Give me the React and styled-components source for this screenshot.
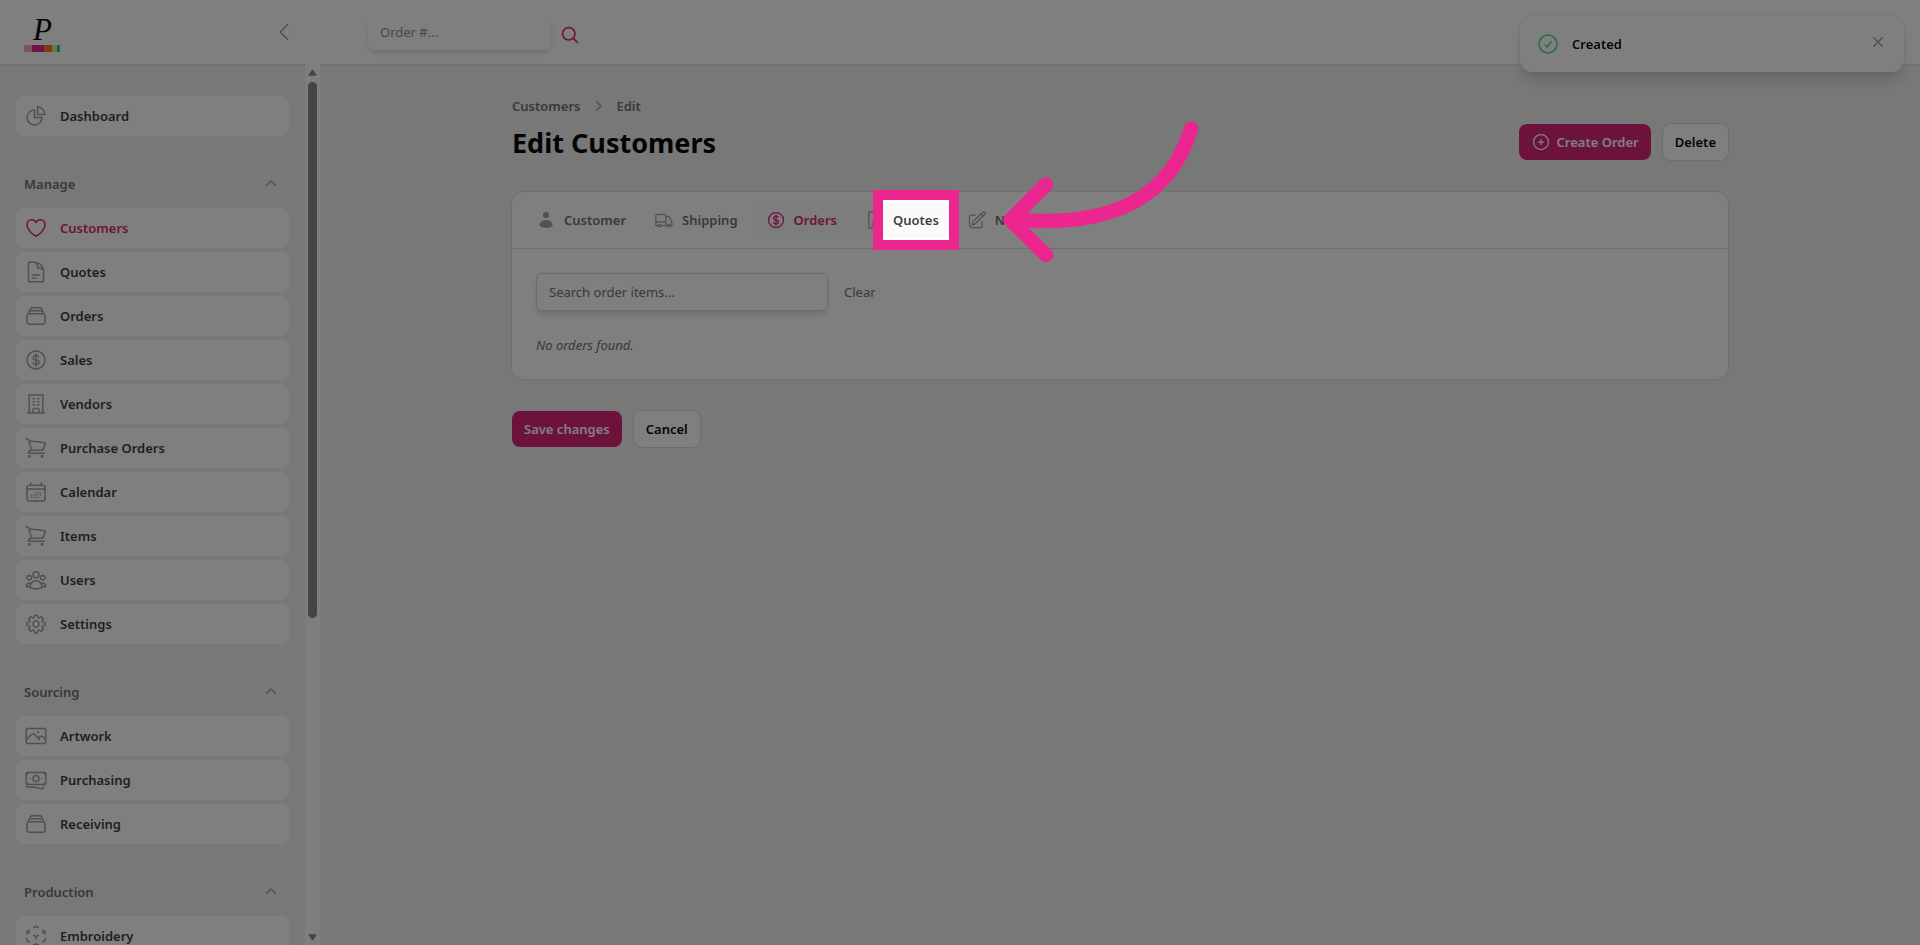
import React from 'react';
import styled, { createGlobalStyle } from 'styled-components';
import {
	HiOutlineChartPie,
	HiOutlineHeart,
	HiOutlineDocumentText,
	HiOutlineRectangleStack,
	HiOutlineCurrencyDollar,
	HiOutlineBuildingOffice,
	HiOutlineShoppingCart,
	HiOutlineCalendarDays,
	HiOutlineUserGroup,
	HiOutlineCog8Tooth,
	HiOutlinePhoto,
	HiOutlineBanknotes,
	HiOutlineCubeTransparent,
	HiOutlineTruck,
	HiOutlinePencilSquare,
	HiOutlinePlusCircle,
	HiOutlineCheckCircle,
	HiOutlineChevronLeft,
	HiOutlineMagnifyingGlass,
	HiMiniUser,
	HiMiniChevronUp,
	HiMiniChevronRight,
	HiMiniXMark,
} from 'react-icons/hi2';

const GlobalStyle = createGlobalStyle`
	* {
		box-sizing: border-box;
	}
	body {
		margin: 0;
		background: #f0f0f0;
		color: #09090b;
		font-family: "Noto Sans", "Open Sans", sans-serif;
		font-size: 13px;
		line-height: 20px;
	}
	button, input {
		font: inherit;
	}
	button {
		cursor: pointer;
	}
	a {
		color: inherit;
		text-decoration: none;
	}
	svg {
		flex: none;
	}
`;

const Page = styled.div`
	display: flex;
	flex-direction: column;
	height: 100vh;
	overflow: hidden;
`;

const TopBar = styled.header`
	display: flex;
	align-items: center;
	flex: none;
	height: 64px;
	background: #fff;
	box-shadow: 0 0 0 1px #e4e4e7, 0 1px 2px rgba(0, 0, 0, 0.1);
`;

const Brand = styled.div`
	display: flex;
	align-items: center;
	justify-content: space-between;
	width: 320px;
	padding: 0 24px;
`;

const CollapseButton = styled.button`
	display: flex;
	padding: 0;
	border: 0;
	background: none;
	color: #a1a1aa;
`;

const OrderSearch = styled.form`
	display: flex;
	align-items: center;
	gap: 9px;
	padding-left: 48px;
`;

const OrderInput = styled.input`
	width: 183px;
	height: 36px;
	padding: 0 12px;
	border: 0;
	border-radius: 8px;
	background: #fff;
	box-shadow: 0 4px 6px -1px rgba(0, 0, 0, 0.14);
	&::placeholder {
		color: #8f8f98;
		opacity: 1;
	}
`;

const SearchButton = styled.button`
	display: flex;
	padding: 6px 0 0;
	border: 0;
	background: none;
	color: #db2777;
`;

const Body = styled.div`
	display: flex;
	flex: 1;
	min-height: 0;
`;

const Sidebar = styled.aside`
	display: flex;
	flex: none;
	width: 320px;
	overflow: hidden;
`;

const Nav = styled.nav`
	display: flex;
	flex: 1;
	flex-direction: column;
	gap: 32px;
	padding: 32px 16px;
`;

const NavGroup = styled.div`
	display: flex;
	flex-direction: column;
	gap: 4px;
`;

const GroupButton = styled.button`
	display: flex;
	align-items: center;
	justify-content: space-between;
	height: 36px;
	padding: 0 8px 4px;
	border: 0;
	background: none;
	color: #71717a;
	font-weight: 600;
`;

const NavItem = styled.a`
	display: flex;
	align-items: center;
	flex: none;
	gap: 12px;
	height: 40px;
	padding: 0 8px;
	border-radius: 8px;
	background: #fff;
	color: ${props => (props.$active ? '#db2777' : '#3f3f46')};
	font-weight: 600;
	svg {
		color: ${props => (props.$active ? '#db2777' : '#a1a1aa')};
	}
`;

const ScrollTrack = styled.div`
	display: flex;
	flex-direction: column;
	align-items: center;
	justify-content: space-between;
	width: 15px;
	padding: 5px 0 4px;
	background: #fcfcfc;
`;

const ScrollTop = styled.div`
	display: flex;
	flex-direction: column;
	align-items: center;
	gap: 6px;
	height: 63%;
`;

const ScrollThumb = styled.div`
	flex: 1;
	width: 9px;
	border-radius: 5px;
	background: #8a8a8a;
`;

const Main = styled.main`
	flex: 1;
	min-width: 0;
`;

const Content = styled.div`
	max-width: 1280px;
	margin: 0 auto;
	padding: 32px;
`;

const PageHeader = styled.div`
	display: flex;
	align-items: center;
	justify-content: space-between;
	margin-bottom: 30px;
`;

const Breadcrumbs = styled.nav`
	display: flex;
	align-items: center;
	gap: 8px;
	margin-bottom: 8px;
	color: #71717a;
	font-weight: 600;
	svg {
		color: #a1a1aa;
	}
`;

const Title = styled.h1`
	margin: 0;
	font-size: 27px;
	font-weight: 700;
	line-height: 38px;
`;

const Buttons = styled.div`
	display: flex;
	gap: 12px;
`;

const HeaderButtons = styled(Buttons)`
	margin-top: 26px;
`;

const Button = styled.button`
	display: flex;
	align-items: center;
	gap: 6px;
	height: 36px;
	padding: 0 12px;
	border: 0;
	border-radius: 8px;
	background: ${props => (props.$primary ? '#db2777' : '#fff')};
	color: ${props => (props.$primary ? '#fff' : '#09090b')};
	box-shadow: ${props => (props.$primary ? 'none' : '0 0 0 1px #d9d9dc, 0 1px 2px rgba(0, 0, 0, 0.05)')};
	font-weight: 600;
`;

const Card = styled.section`
	margin-bottom: 32px;
	border-radius: 12px;
	background: #fff;
	box-shadow: 0 0 0 1px #e0e0e3, 0 1px 2px rgba(0, 0, 0, 0.05);
`;

const Tabs = styled.div`
	display: flex;
	gap: 4px;
	padding: 10px 12px;
	border-bottom: 1px solid #dcdcdf;
`;

const Tab = styled.button`
	display: flex;
	align-items: center;
	gap: 8px;
	height: 36px;
	padding: 0 12px;
	border: 0;
	border-radius: 8px;
	background: ${props => (props.$active || props.$hovered ? '#fafafa' : 'none')};
	color: ${props => (props.$active ? '#db2777' : props.$hovered ? '#3f3f46' : '#71717a')};
	font-weight: 600;
	svg {
		color: ${props => (props.$active ? '#db2777' : '#a1a1aa')};
	}
`;

const TabLabel = styled.span`
	position: relative;
`;

const Panel = styled.div`
	padding: 24px;
`;

const SearchRow = styled.div`
	display: flex;
	align-items: center;
	gap: 16px;
	margin-bottom: 24px;
`;

const ItemsInput = styled.input`
	width: 292px;
	height: 38px;
	padding: 0 12px;
	border: 1px solid #d4d4d8;
	border-radius: 6px;
	background: #fff;
	box-shadow: 0 4px 6px -1px rgba(0, 0, 0, 0.14);
	&::placeholder {
		color: #71717a;
		opacity: 1;
	}
`;

const ClearButton = styled.button`
	padding: 0;
	border: 0;
	background: none;
	color: #71717a;
`;

const EmptyText = styled.p`
	margin: 0;
	color: #71717a;
	font-style: italic;
`;

const Toast = styled.div`
	position: fixed;
	top: 16px;
	right: 16px;
	display: flex;
	align-items: center;
	gap: 12px;
	width: 384px;
	height: 56px;
	padding: 0 16px;
	border-radius: 12px;
	background: #fff;
	box-shadow: 0 0 0 1px rgba(9, 9, 11, 0.05), 0 10px 15px -3px rgba(0, 0, 0, 0.16);
	font-weight: 600;
	svg {
		color: #4ade80;
	}
`;

const CloseButton = styled.button`
	display: flex;
	margin-left: auto;
	padding: 0 0 4px;
	border: 0;
	background: none;
	svg {
		color: #a1a1aa;
	}
`;

// dims the whole page except for the label it surrounds
const Spotlight = styled.span`
	position: absolute;
	z-index: 20;
	inset: -20px;
	border: 10px solid #ec268f;
	box-shadow: 0 0 0 4000px rgba(0, 0, 0, 0.5);
	pointer-events: none;
`;

const Arrow = styled.svg`
	position: absolute;
	z-index: 21;
	top: -91px;
	left: 100%;
	margin-left: 60px;
	pointer-events: none;
`;

const navGroups = [
	{
		title: 'Manage',
		items: [
			{ label: 'Customers', icon: HiOutlineHeart, active: true },
			{ label: 'Quotes', icon: HiOutlineDocumentText },
			{ label: 'Orders', icon: HiOutlineRectangleStack },
			{ label: 'Sales', icon: HiOutlineCurrencyDollar },
			{ label: 'Vendors', icon: HiOutlineBuildingOffice },
			{ label: 'Purchase Orders', icon: HiOutlineShoppingCart },
			{ label: 'Calendar', icon: HiOutlineCalendarDays },
			{ label: 'Items', icon: HiOutlineShoppingCart },
			{ label: 'Users', icon: HiOutlineUserGroup },
			{ label: 'Settings', icon: HiOutlineCog8Tooth },
		],
	},
	{
		title: 'Sourcing',
		items: [
			{ label: 'Artwork', icon: HiOutlinePhoto },
			{ label: 'Purchasing', icon: HiOutlineBanknotes },
			{ label: 'Receiving', icon: HiOutlineRectangleStack },
		],
	},
	{
		title: 'Production',
		items: [{ label: 'Embroidery', icon: HiOutlineCubeTransparent }],
	},
];

const tabs = [
	{ label: 'Customer', icon: HiMiniUser },
	{ label: 'Shipping', icon: HiOutlineTruck },
	{ label: 'Orders', icon: HiOutlineCurrencyDollar, active: true },
	{ label: 'Quotes', icon: HiOutlineDocumentText, highlighted: true },
	{ label: 'Notes', icon: HiOutlinePencilSquare },
];

const Logo = () => (
	<svg width="36" height="40" viewBox="0 0 36 40" role="img" aria-label="Logo">
		<text x="9" y="28" fontFamily="Liberation Serif, serif" fontStyle="italic" fontSize="31" fill="#09090b">P</text>
		<rect x="0" y="33" width="8" height="7" fill="#f0a6d0" />
		<rect x="8" y="33" width="12" height="7" fill="#ec1c96" />
		<rect x="20" y="33" width="8" height="7" fill="#f2783a" />
		<rect x="28" y="33" width="5" height="7" fill="#f4ee4c" />
		<rect x="33" y="33" width="3" height="7" fill="#29b8d8" />
	</svg>
);

const NavLink = ({ item }) => {
	const Icon = item.icon;
	return (
		<NavItem href="#" $active={item.active}>
			<Icon size={24} />
			{item.label}
		</NavItem>
	);
};

const App = () => {
	return (
		<Page>
			<GlobalStyle />
			<TopBar>
				<Brand>
					<Logo />
					<CollapseButton aria-label="Collapse sidebar"><HiOutlineChevronLeft size={24} /></CollapseButton>
				</Brand>
				<OrderSearch>
					<OrderInput aria-label="Order number" placeholder="Order #..." />
					<SearchButton type="button" aria-label="Search"><HiOutlineMagnifyingGlass size={20} strokeWidth={2} /></SearchButton>
				</OrderSearch>
			</TopBar>
			<Body>
				<Sidebar>
					<Nav>
						<NavLink item={{ label: 'Dashboard', icon: HiOutlineChartPie }} />
						{navGroups.map(group => (
							<NavGroup key={group.title}>
								<GroupButton>
									{group.title}
									<HiMiniChevronUp size={20} color="#a1a1aa" />
								</GroupButton>
								{group.items.map(item => <NavLink key={item.label} item={item} />)}
							</NavGroup>
						))}
					</Nav>
					<ScrollTrack>
						<ScrollTop>
							<svg width="9" height="7" viewBox="0 0 9 7"><path d="M4.5 0.8 8.2 6.2H0.8z" fill="#8a8a8a" stroke="#8a8a8a" strokeLinejoin="round" /></svg>
							<ScrollThumb />
						</ScrollTop>
						<svg width="9" height="7" viewBox="0 0 9 7"><path d="M4.5 6.2 8.2 0.8H0.8z" fill="#8a8a8a" stroke="#8a8a8a" strokeLinejoin="round" /></svg>
					</ScrollTrack>
				</Sidebar>
				<Main>
					<Content>
						<PageHeader>
							<div>
								<Breadcrumbs>
									<a href="#">Customers</a>
									<HiMiniChevronRight size={20} />
									<a href="#">Edit</a>
								</Breadcrumbs>
								<Title>Edit Customers</Title>
							</div>
							<HeaderButtons>
								<Button $primary><HiOutlinePlusCircle size={20} />Create Order</Button>
								<Button>Delete</Button>
							</HeaderButtons>
						</PageHeader>
						<Card>
							<Tabs>
								{tabs.map(({ label, icon: Icon, active, highlighted }) => (
									<Tab key={label} $active={active} $hovered={highlighted}>
										<Icon size={20} />
										<TabLabel>
											{label}
											{highlighted && (
												<>
													<Spotlight />
													<Arrow width="200" height="150" viewBox="0 0 200 150" fill="none" stroke="#ec268f" strokeWidth="14.5" strokeLinecap="round" strokeLinejoin="round">
														<path d="M192 9.5C172 79 111 108 22 101" />
														<path d="M47 65.5 11.5 101 47 136" />
													</Arrow>
												</>
											)}
										</TabLabel>
									</Tab>
								))}
							</Tabs>
							<Panel>
								<SearchRow>
									<ItemsInput aria-label="Search order items" placeholder="Search order items..." />
									<ClearButton>Clear</ClearButton>
								</SearchRow>
								<EmptyText>No orders found.</EmptyText>
							</Panel>
						</Card>
						<Buttons>
							<Button $primary>Save changes</Button>
							<Button>Cancel</Button>
						</Buttons>
					</Content>
				</Main>
			</Body>
			<Toast role="status">
				<HiOutlineCheckCircle size={24} />
				Created
				<CloseButton aria-label="Close"><HiMiniXMark size={20} /></CloseButton>
			</Toast>
		</Page>
	);
}

export default App
